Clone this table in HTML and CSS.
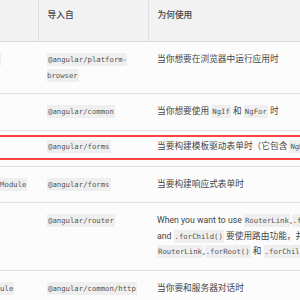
FILE: index.html
```html
<!DOCTYPE html>
<html lang="zh">
<head>
<meta charset="utf-8">
<link rel="stylesheet" href="styles.css">
</head>
<body>
<div class="viewport">
<table class="modules">
<colgroup><col class="c1"><col class="c2"><col class="c3"></colgroup>
<thead>
<tr><th>NgModule</th><th>导入自</th><th>为何使用</th></tr>
</thead>
<tbody>
<tr><td class="name"><code>BrowserModule</code></td><td><code>@angular/platform-browser</code></td><td>当你想要在浏览器中运行应用时</td></tr>
<tr><td class="name"><code>CommonModule</code></td><td><code>@angular/common</code></td><td>当你想要使用 <code>NgIf</code> 和 <code>NgFor</code> 时</td></tr>
<tr class="marked"><td class="name"><div class="mark"><code>FormsModule</code></div></td><td><div class="mark"><code>@angular/forms</code></div></td><td><div class="mark">当要构建模板驱动表单时（它包含 <code>NgModel</code>）</div></td></tr>
<tr><td class="name"><code>ReactiveFormsModule</code></td><td><code>@angular/forms</code></td><td>当要构建响应式表单时</td></tr>
<tr><td class="name"><code>RouterModule</code></td><td><code>@angular/router</code></td><td>When you want to use <code>RouterLink</code>,<code>.forRoot()</code> and <code>.forChild()</code> 要使用路由功能，并且你要用到 <code>RouterLink</code>,<code>.forRoot()</code> 和 <code>.forChild()</code> 时</td></tr>
<tr><td class="name"><code>HttpClientModule</code></td><td><code>@angular/common/http</code></td><td>当你要和服务器对话时</td></tr>
</tbody>
</table>
</div>
</body>
</html>
```
FILE: styles.css
```css
body {
  margin: 0;
  background: #fafafa;
  font-family: Roboto, "Noto Sans CJK SC", sans-serif;
  font-size: 8.7px;
  color: #444;
}
.viewport {
  width: 300px;
  height: 300px;
  overflow: hidden;
}
.modules {
  margin-left: -67px;
  border-collapse: collapse;
  table-layout: fixed;
  width: 425px;
}
.c1 { width: 105px; }
.c2 { width: 110px; }
.c3 { width: 210px; }
th {
  background: #f2f2f2;
  text-align: left;
  font-weight: 500;
  color: #444;
  padding: 8px 9px 19px;
  line-height: 14px;
  vertical-align: top;
  border-right: 1px solid #e0e0e0;
  border-bottom: 1px solid #dcdcdc;
}
td {
  padding: 10px 9px;
  line-height: 14.5px;
  vertical-align: top;
  background: #fcfcfc;
  border-bottom: 1px solid #e2e2e2;
}
td.name { white-space: nowrap; }
code {
  font-family: "DejaVu Sans Mono", monospace;
  font-size: 7.3px;
  color: #555;
  background: #efefef;
  padding: 2px 1px;
}
.marked td {
  padding: 4px 0 6px;
}
.mark {
  border-top: 2px solid #f44;
  border-bottom: 2px solid #f44;
  padding: 2px 9px 3.5px;
}
```
